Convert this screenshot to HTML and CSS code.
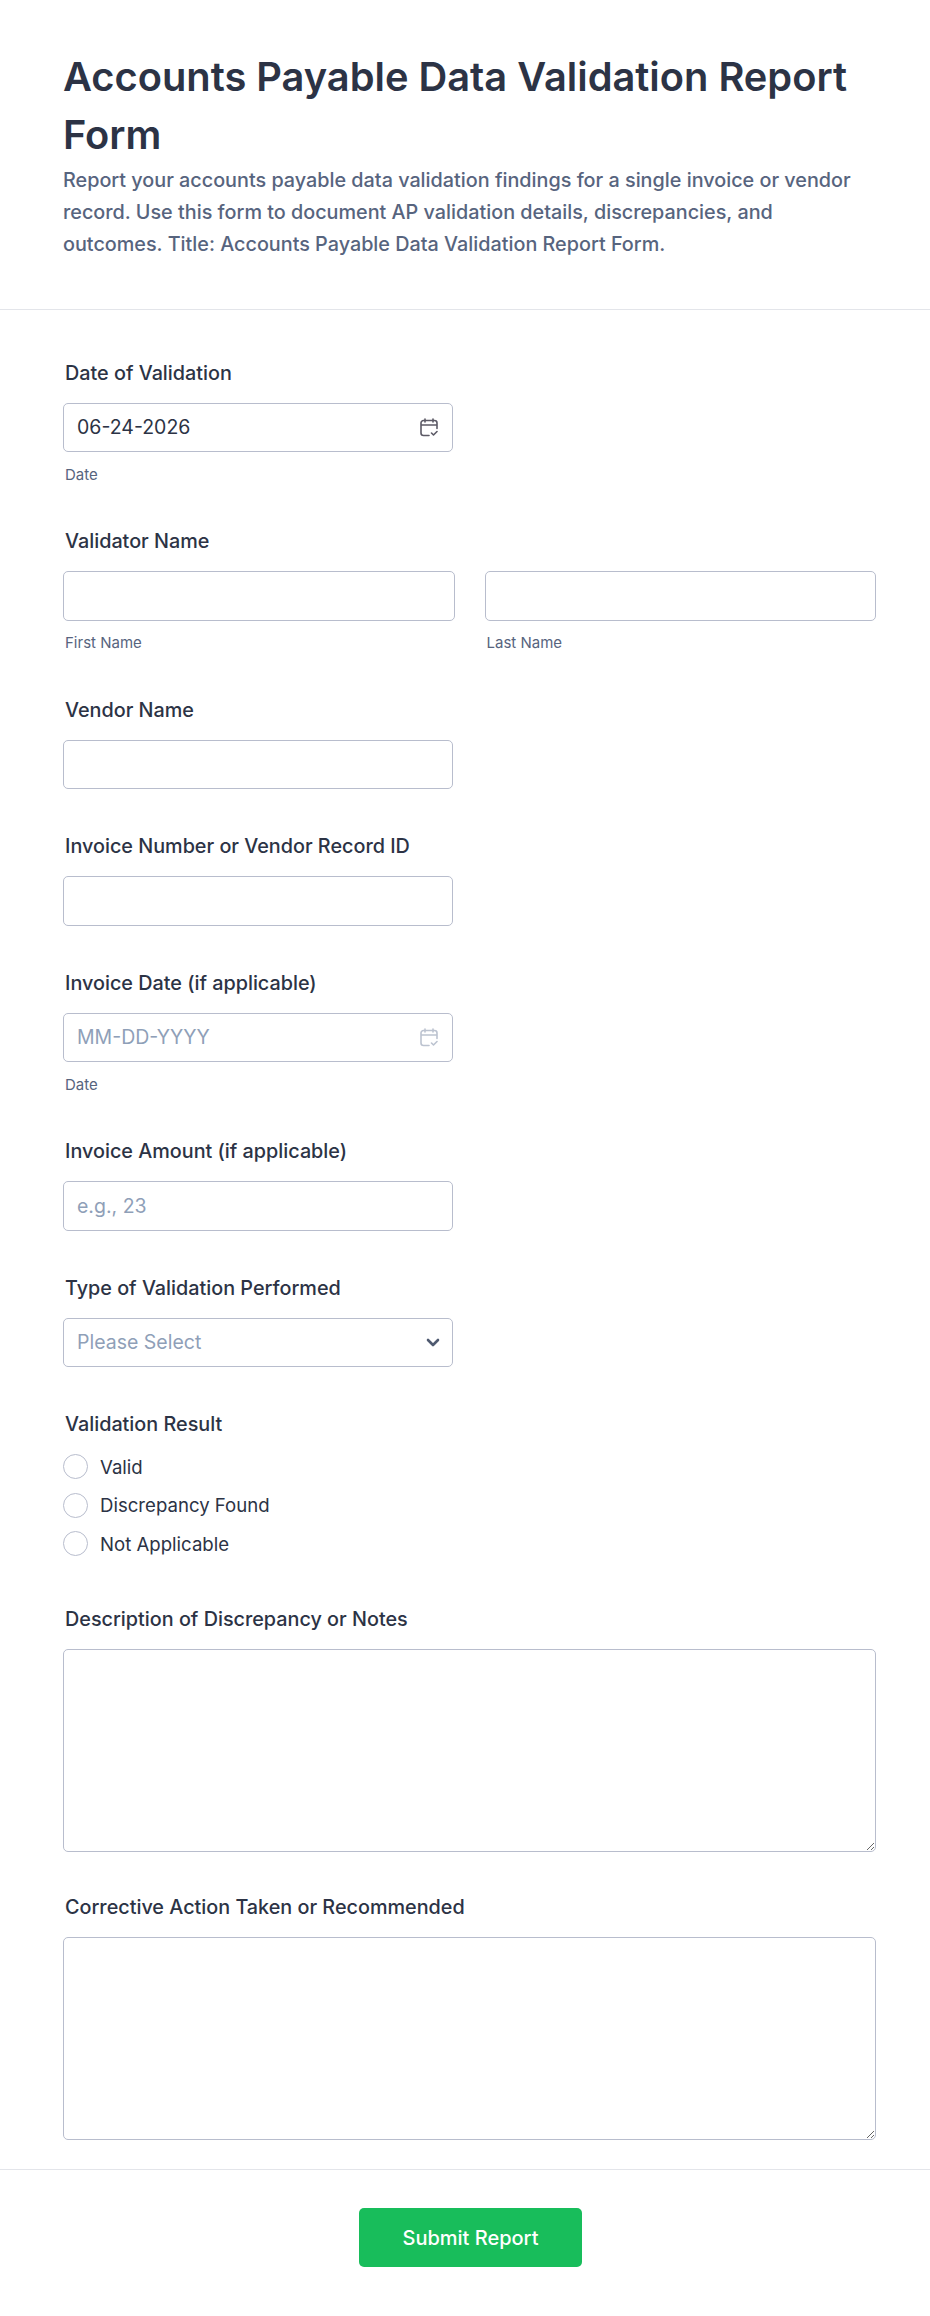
FILE: index.html
```html
<!DOCTYPE html>
<html lang="en">
<head>
<meta charset="UTF-8">
<meta name="viewport" content="width=device-width, initial-scale=1.0">
<title>Accounts Payable Data Validation Report Form</title>
<link rel="stylesheet" href="styles.css">
</head>
<body>
<header class="form-header">
<h1>Accounts Payable Data Validation Report Form</h1>
<p>Report your accounts payable data validation findings for a single invoice or vendor record. Use this form to document AP validation details, discrepancies, and outcomes. Title: Accounts Payable Data Validation Report Form.</p>
</header>

<form class="form-body">
<div class="field">
<label class="field-label" for="validation-date">Date of Validation</label>
<div class="input-wrap half">
<input type="text" id="validation-date" value="06-24-2026">
<svg class="calendar" viewBox="0 0 18 19" fill="none" stroke="#5c5a66" stroke-width="1.6" stroke-linecap="round" stroke-linejoin="round"><path d="M9 17.5H3.5a2.5 2.5 0 0 1-2.5-2.5V5a2.5 2.5 0 0 1 2.5-2.5h11A2.5 2.5 0 0 1 17 5v5.5M1 7h16M5 1v3M13 1v3M11.5 15l2 2 3.5-3.5"/></svg>
</div>
<div class="sublabel">Date</div>
</div>

<div class="field">
<div class="field-label">Validator Name</div>
<div class="name-row">
<div>
<input type="text" aria-label="First Name">
<div class="sublabel">First Name</div>
</div>
<div>
<input type="text" aria-label="Last Name">
<div class="sublabel">Last Name</div>
</div>
</div>
</div>

<div class="field">
<label class="field-label" for="vendor">Vendor Name</label>
<div class="half"><input type="text" id="vendor"></div>
</div>

<div class="field">
<label class="field-label" for="invoice-number">Invoice Number or Vendor Record ID</label>
<div class="half"><input type="text" id="invoice-number"></div>
</div>

<div class="field">
<label class="field-label" for="invoice-date">Invoice Date (if applicable)</label>
<div class="input-wrap half">
<input type="text" id="invoice-date" placeholder="MM-DD-YYYY">
<svg class="calendar" viewBox="0 0 18 19" fill="none" stroke="#bcc3d0" stroke-width="1.6" stroke-linecap="round" stroke-linejoin="round"><path d="M9 17.5H3.5a2.5 2.5 0 0 1-2.5-2.5V5a2.5 2.5 0 0 1 2.5-2.5h11A2.5 2.5 0 0 1 17 5v5.5M1 7h16M5 1v3M13 1v3M11.5 15l2 2 3.5-3.5"/></svg>
</div>
<div class="sublabel">Date</div>
</div>

<div class="field">
<label class="field-label" for="amount">Invoice Amount (if applicable)</label>
<div class="half"><input type="text" id="amount" placeholder="e.g., 23"></div>
</div>

<div class="field">
<label class="field-label" for="validation-type">Type of Validation Performed</label>
<div class="input-wrap half">
<select id="validation-type">
<option>Please Select</option>
</select>
<svg class="chevron" viewBox="0 0 14 10" fill="none" stroke="#4f5a70" stroke-width="2.6" stroke-linecap="round" stroke-linejoin="round"><path d="M2 2l5 5 5-5"/></svg>
</div>
</div>

<div class="field field-radios">
<div class="field-label">Validation Result</div>
<div class="radio-list">
<label class="radio"><input type="radio" name="result">Valid</label>
<label class="radio"><input type="radio" name="result">Discrepancy Found</label>
<label class="radio"><input type="radio" name="result">Not Applicable</label>
</div>
</div>

<div class="field field-text">
<label class="field-label" for="notes">Description of Discrepancy or Notes</label>
<textarea id="notes"></textarea>
</div>

<div class="field field-text">
<label class="field-label" for="action">Corrective Action Taken or Recommended</label>
<textarea id="action"></textarea>
</div>
</form>

<footer class="form-footer">
<button type="button">Submit Report</button>
</footer>
</body>
</html>
```

FILE: styles.css
```css
* {
  box-sizing: border-box;
}

body {
  margin: 0;
  background: #fff;
  font-family: Inter, "Liberation Sans", sans-serif;
  color: #2c3345;
}

.form-header {
  padding: 48px 60px 48.5px 63px;
  border-bottom: 1px solid #e3e5ea;
}

h1 {
  margin: 0 0 1px;
  font-size: 39.8px;
  line-height: 57.5px;
  font-weight: 600;
}

.form-header p {
  margin: 0;
  font-size: 19.8px;
  line-height: 32px;
  font-weight: 500;
  color: #57647e;
}

.form-body {
  padding: 51px 54px 0 63px;
}

.field {
  margin-bottom: 45px;
}

.field-label {
  display: block;
  margin: 0 0 18px 2px;
  font-size: 19.8px;
  line-height: 24px;
  font-weight: 500;
}

.half {
  width: 389.5px;
}

.input-wrap {
  position: relative;
}

input[type="text"], select, textarea {
  display: block;
  width: 100%;
  height: 49.5px;
  padding: 0 13px;
  background: #fff;
  border: 1.5px solid #b8bdcd;
  border-radius: 5px;
  font-family: inherit;
  font-size: 19.5px;
  color: #2c3345;
}

input::placeholder {
  color: #8f9fb8;
  opacity: 1;
}

select {
  appearance: none;
  color: #8f9fb8;
}

textarea {
  height: 203px;
  padding: 13px;
}

.calendar {
  position: absolute;
  top: 15.5px;
  right: 14.5px;
  width: 18px;
  height: 19px;
}

.chevron {
  position: absolute;
  top: 20px;
  right: 13px;
  width: 14px;
  height: 10px;
}

.sublabel {
  margin: 12.5px 0 0 2px;
  font-size: 15px;
  line-height: 19.5px;
  color: #57647e;
}

.name-row {
  display: grid;
  grid-template-columns: 391.5px 391.5px;
  gap: 30px;
}

.radio-list {
  display: flex;
  flex-direction: column;
  gap: 13.5px;
}

.radio {
  display: flex;
  align-items: center;
  gap: 12px;
  height: 25px;
  font-size: 18.6px;
}

.radio input {
  appearance: none;
  width: 25px;
  height: 25px;
  margin: 0;
  background: #fff;
  border: 1.5px solid #b8bdcd;
  border-radius: 50%;
}

.field-radios {
  margin-bottom: 50.5px;
}

.field-text {
  margin-bottom: 43px;
}

.field-text:last-child {
  margin-bottom: 0;
}

.form-footer {
  margin-top: 29.5px;
  padding: 38px 0 49px;
  border-top: 1px solid #e3e5ea;
  text-align: center;
}

button {
  width: 223px;
  height: 59px;
  padding: 0;
  margin-left: 11px;
  background: #18bd5b;
  color: #fff;
  border: none;
  border-radius: 5px;
  font-family: inherit;
  font-size: 20px;
  font-weight: 500;
  cursor: pointer;
}
```
